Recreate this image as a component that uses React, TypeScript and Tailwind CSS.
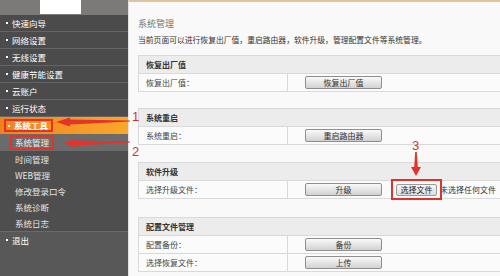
import React from "react";

const FONT = "font-['Noto_Sans_CJK_SC','Noto_Sans',sans-serif]";

const MENU = ["快速向导", "网络设置", "无线设置", "健康节能设置", "云账户", "运行状态"];
const SUBMENU = ["时间管理", "WEB管理", "修改登录口令", "系统诊断", "系统日志"];

function Bullet() {
  return <span className="w-[2px] h-[2px] bg-white mr-[4px] shrink-0" />;
}

function Btn({ label }: { label: string }) {
  return (
    <div className="w-[77px] h-[13px] border border-[#8e8e8e] rounded-[2px] bg-linear-to-b from-[#fafafa] to-[#d2d2d2] flex items-center justify-center text-[8px] text-[#333] leading-none">
      {label}
    </div>
  );
}

function Row({ label, children }: { label: string; children: React.ReactNode }) {
  return (
    <div className="h-[18px] flex bg-[#fbfbfb] border-t border-[#d9d9d9]">
      <div className="w-[149px] border-r border-[#d9d9d9] pl-[7px] flex items-center text-[8px] text-[#444]">
        {label}
      </div>
      <div className="flex-1 pl-[17px] flex items-center">{children}</div>
    </div>
  );
}

function Section({ title, children, className }: { title: string; children: React.ReactNode; className?: string }) {
  return (
    <div className={`w-[370px] border border-[#d9d9d9] ${className ?? ""}`}>
      <div className="h-[17px] bg-[#ececec] pl-[7px] flex items-center text-[8px] font-bold text-[#333]">
        {title}
      </div>
      {children}
    </div>
  );
}

export default function App() {
  return (
    <div className={`relative w-[500px] h-[276px] flex overflow-hidden bg-white ${FONT}`}>
      {/* sidebar */}
      <div className="w-[128px] shrink-0 flex flex-col bg-[#585858]">
        <div className="h-[15px] bg-[#7c7979] pl-[40px]">
          <div className="w-[41px] h-[14px] bg-white" />
        </div>
        {MENU.map((m) => (
          <div
            key={m}
            className="h-[17px] flex items-center pl-[6px] bg-[#4b4b4b] border-b border-[#646464] text-[8.5px] text-white"
          >
            <Bullet />
            {m}
          </div>
        ))}
        <div className="h-[17px] flex items-center pl-[4px] bg-linear-to-r from-[#f0841a] to-[#f9a82a]">
          <div className="h-[13px] flex items-center border-2 border-[#e5302a] pl-[2px] pr-[3px] text-[8.5px] text-white font-bold">
            <Bullet />
            系统工具
          </div>
        </div>
        <div className="flex flex-col bg-[#4e4e4e]">
          <div className="h-[17px] flex items-center pl-[10px] bg-[#6b6b6b]">
            <div className="h-[15px] flex items-center border-2 border-[#e2322b] px-[3px] text-[8.5px] text-[#eee]">
              系统管理
            </div>
          </div>
          {SUBMENU.map((s) => (
            <div key={s} className="h-[16px] flex items-center pl-[15px] text-[8.5px] text-[#e4e4e4]">
              {s}
            </div>
          ))}
        </div>
        <div className="h-[17px] flex items-center pl-[6px] border-t border-[#6a6a6a] text-[8.5px] text-white">
          <Bullet />
          退出
        </div>
      </div>

      {/* content */}
      <div className="flex-1 overflow-hidden bg-[#f9f9f9] border-t-2 border-[#dcc7a0] border-l border-l-[#e2e2e2] pl-[9px] pt-[14px]">
        <div className="h-[15px] leading-[15px] text-[9px] text-[#777]">系统管理</div>
        <div className="mt-[3px] h-[12px] leading-[12px] text-[7.8px] text-[#333] whitespace-nowrap">
          当前页面可以进行恢复出厂值，重启路由器，软件升级，管理配置文件等系统管理。
        </div>

        <Section title="恢复出厂值" className="mt-[9px]">
          <Row label="恢复出厂值：">
            <Btn label="恢复出厂值" />
          </Row>
        </Section>

        <Section title="系统重启" className="mt-[16px]">
          <Row label="系统重启：">
            <Btn label="重启路由器" />
          </Row>
        </Section>

        <Section title="软件升级" className="mt-[17px]">
          <Row label="选择升级文件：">
            <Btn label="升级" />
            <div className="ml-[14px] w-[41px] h-[12px] border border-[#9a9a9a] rounded-[2px] bg-linear-to-b from-[#f7f7f7] to-[#dedede] flex items-center justify-center text-[8px] text-[#222] leading-none">
              选择文件
            </div>
            <span className="ml-[3px] text-[8px] text-[#333] whitespace-nowrap">未选择任何文件</span>
          </Row>
        </Section>

        <Section title="配置文件管理" className="mt-[18px]">
          <Row label="配置备份：">
            <Btn label="备份" />
          </Row>
          <Row label="选择恢复文件：">
            <Btn label="上传" />
          </Row>
        </Section>
      </div>

      {/* annotations */}
      <svg className="absolute left-0 top-0 pointer-events-none" width="500" height="276">
        <polygon points="130,120.4 70,119.4 70,117.6 56,122 70,126.4 70,124.4 130,121.6" fill="#e5322b" />
        <polygon points="130,141.4 76,140.4 76,138.6 63,143 76,147.4 76,145.4 130,142.6" fill="#e5322b" />
        <polygon points="415.2,152 416.8,152 417.8,167 421,167 416,176 411,167 414.2,167" fill="#e5322b" />
      </svg>
      <span className="absolute left-[132px] top-[110px] text-[13px] leading-[13px] text-[#d7332c] font-['Liberation_Sans',sans-serif]">
        1
      </span>
      <span className="absolute left-[132px] top-[145px] text-[13px] leading-[13px] text-[#d7332c] font-['Liberation_Sans',sans-serif]">
        2
      </span>
      <span className="absolute left-[412px] top-[139px] text-[13px] leading-[13px] text-[#d7332c] font-['Liberation_Sans',sans-serif]">
        3
      </span>
      <div className="absolute left-[391px] top-[179px] w-[51px] h-[21px] border-2 border-[#e0322b]" />
    </div>
  );
}
